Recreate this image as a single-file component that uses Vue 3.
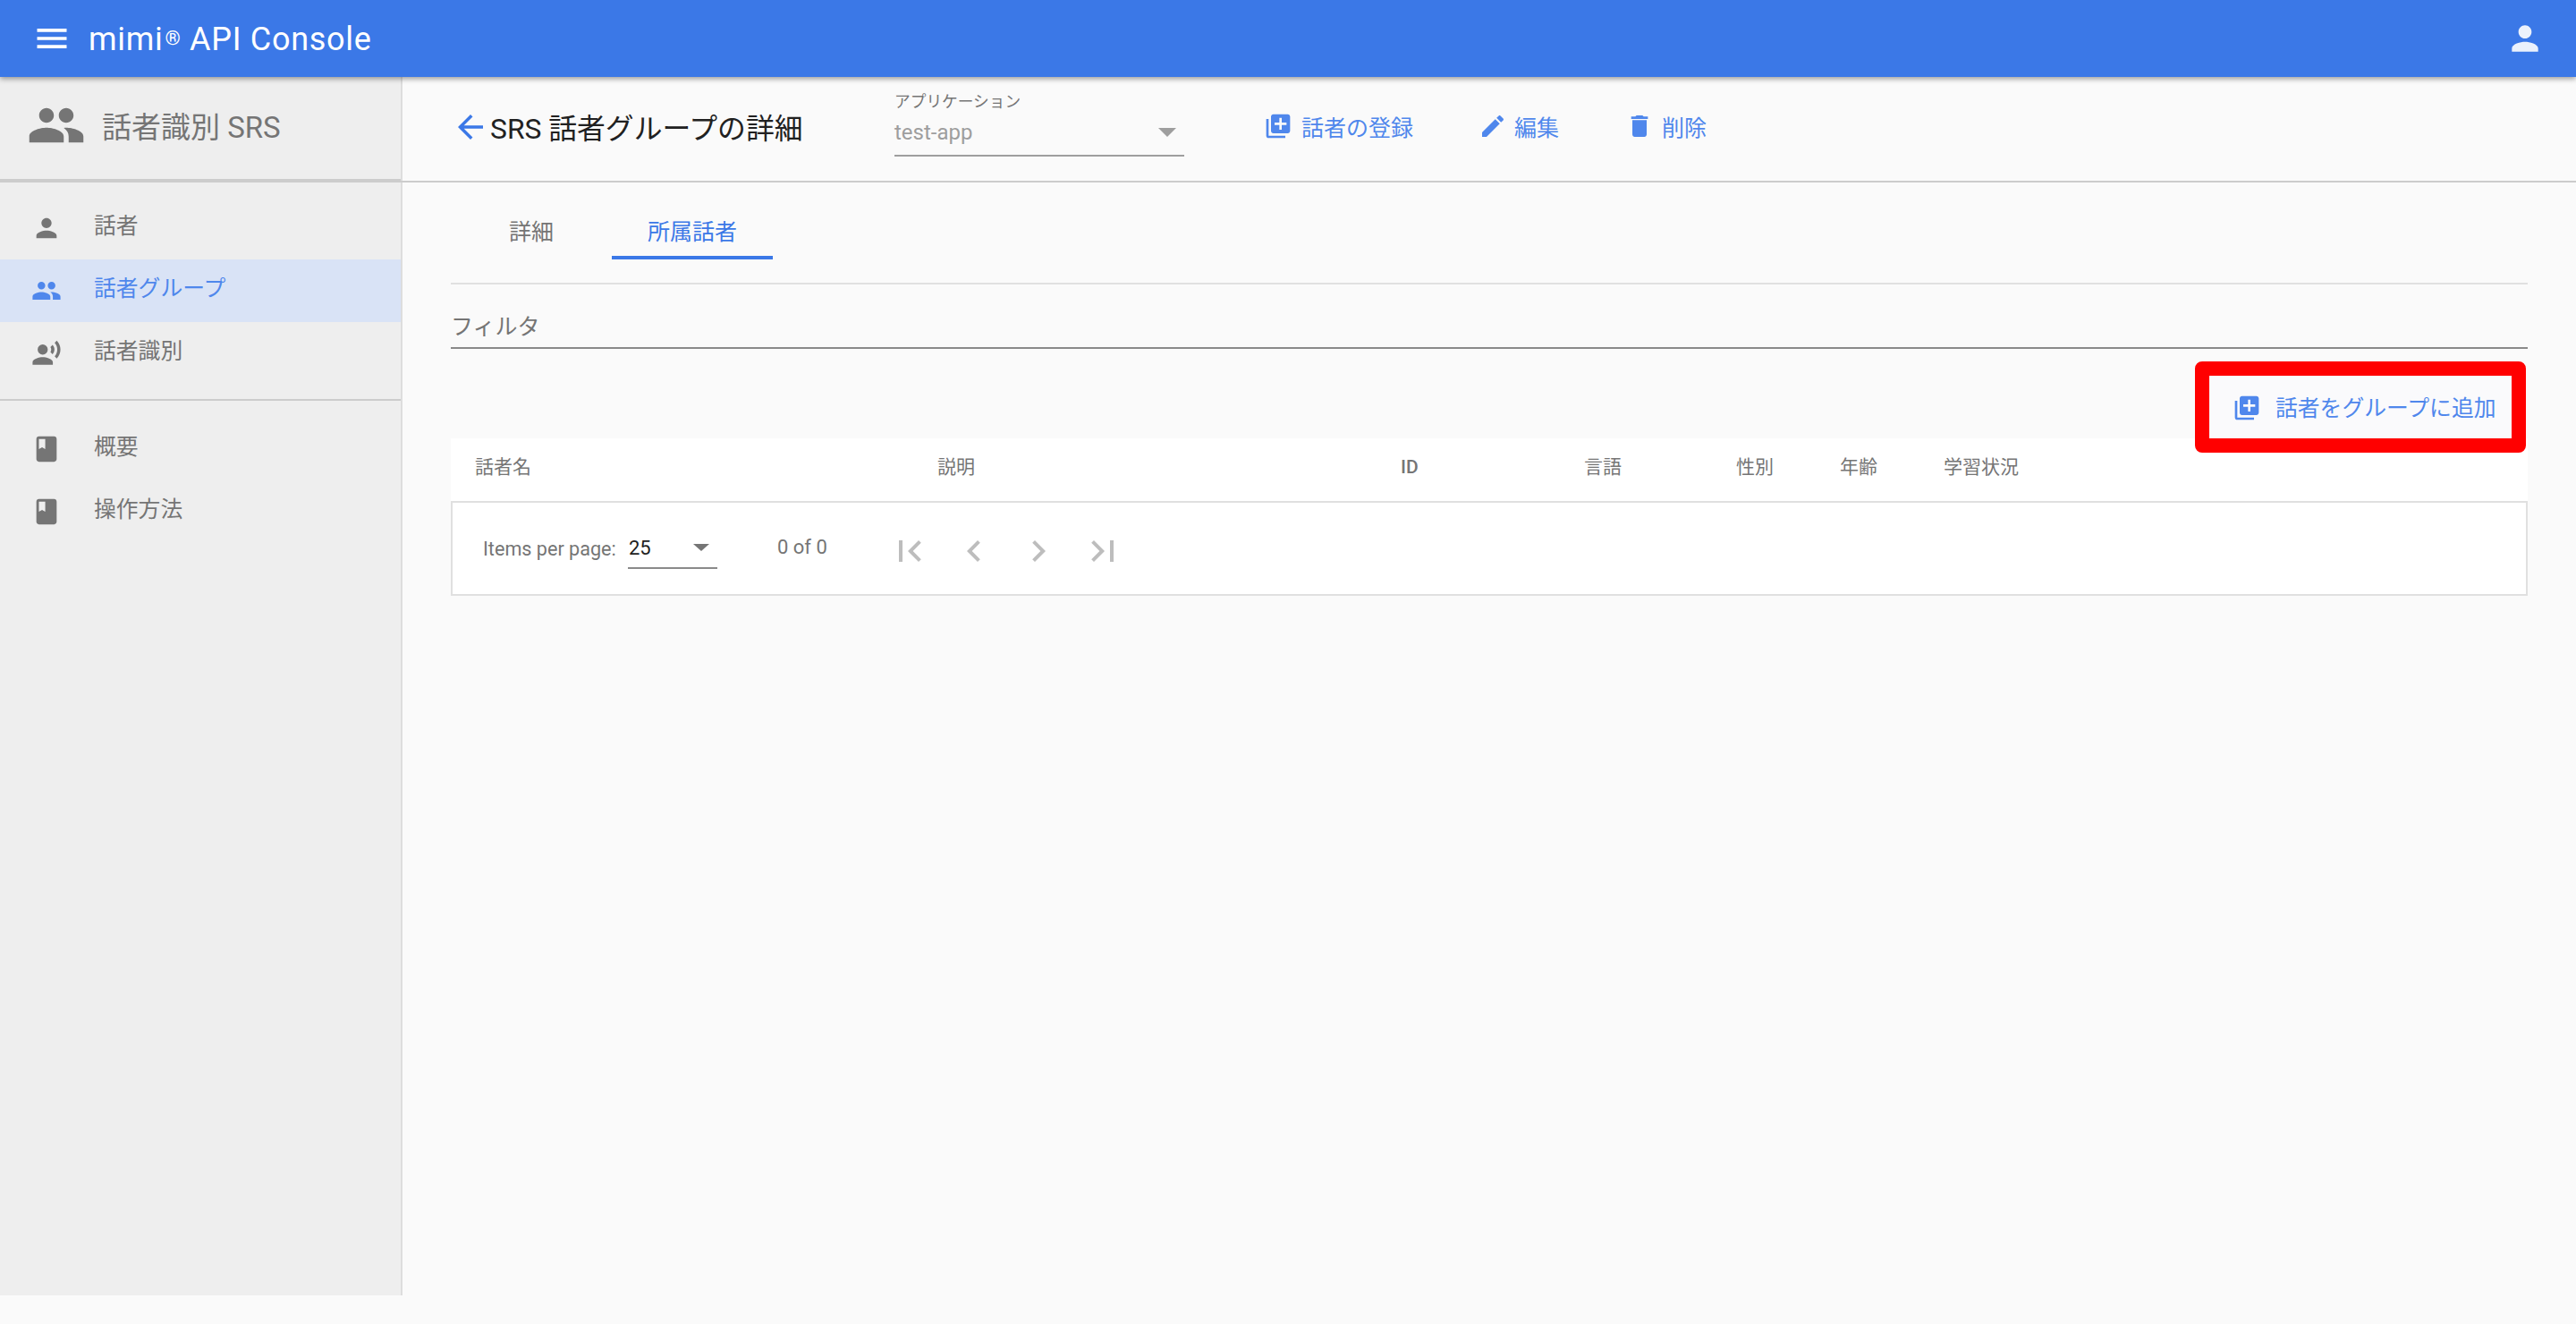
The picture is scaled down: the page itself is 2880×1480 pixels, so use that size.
<script setup>
const icons = {
  menu: 'M3 18h18v-2H3v2zm0-5h18v-2H3v2zm0-7v2h18V6H3z',
  person: 'M12 12c2.21 0 4-1.79 4-4s-1.79-4-4-4-4 1.79-4 4 1.79 4 4 4zm0 2c-2.67 0-8 1.34-8 4v2h16v-2c0-2.66-5.33-4-8-4z',
  group: 'M16 11c1.66 0 2.99-1.34 2.99-3S17.66 5 16 5c-1.66 0-3 1.34-3 3s1.34 3 3 3zm-8 0c1.66 0 2.99-1.34 2.99-3S9.66 5 8 5C6.34 5 5 6.34 5 8s1.34 3 3 3zm0 2c-2.33 0-7 1.17-7 3.5V19h14v-2.5c0-2.33-4.67-3.5-7-3.5zm8 0c-.29 0-.62.02-.97.05 1.16.84 1.97 1.97 1.97 3.45V19h6v-2.5c0-2.33-4.67-3.5-7-3.5z',
  voice: 'M5 9a4 4 0 1 0 8 0 4 4 0 0 0-8 0zM9 15c-2.67 0-8 1.34-8 4v2h16v-2c0-2.66-5.33-4-8-4zm7.76-9.64l-1.68 1.69c.84 1.18.84 2.71 0 3.89l1.68 1.69c2.02-2.02 2.02-5.07 0-7.27zM20.07 2l-1.63 1.63c2.77 3.02 2.77 7.56 0 10.74L20.07 16c3.9-3.89 3.91-9.95 0-14z',
  book: 'M18 2H6c-1.1 0-2 .9-2 2v16c0 1.1.9 2 2 2h12c1.1 0 2-.9 2-2V4c0-1.1-.9-2-2-2zM6 4h5v8l-2.5-1.5L6 12V4z',
  add: 'M4 6H2v14c0 1.1.9 2 2 2h14v-2H4V6zm16-4H8c-1.1 0-2 .9-2 2v12c0 1.1.9 2 2 2h12c1.1 0 2-.9 2-2V4c0-1.1-.9-2-2-2zm-1 9h-4v4h-2v-4H9V9h4V5h2v4h4v2z',
  edit: 'M3 17.25V21h3.75L17.81 9.94l-3.75-3.75L3 17.25zM20.71 7.04c.39-.39.39-1.02 0-1.41l-2.34-2.34c-.39-.39-1.02-.39-1.41 0l-1.83 1.83 3.75 3.75 1.83-1.83z',
  del: 'M6 19c0 1.1.9 2 2 2h8c1.1 0 2-.9 2-2V7H6v12zM19 4h-3.5l-1-1h-5l-1 1H5v2h14V4z',
  back: 'M20 11H7.83l5.59-5.59L12 4l-8 8 8 8 1.41-1.41L7.83 13H20v-2z',
  first: 'M18.41 16.59L13.82 12l4.59-4.59L17 6l-6 6 6 6zM6 6h2v12H6z',
  prev: 'M15.41 7.41L14 6l-6 6 6 6 1.41-1.41L10.83 12z',
  next: 'M10 6L8.59 7.41 13.17 12l-4.58 4.59L10 18l6-6z',
  last: 'M5.59 7.41L10.18 12l-4.59 4.59L7 18l6-6-6-6zM16 6h2v12h-2z',
}
const navTop = [
  { icon: 'person', label: '話者' },
  { icon: 'group', label: '話者グループ', active: true },
  { icon: 'voice', label: '話者識別' },
]
const navBottom = [
  { icon: 'book', label: '概要' },
  { icon: 'book', label: '操作方法' },
]
const actions = [
  { icon: 'add', label: '話者の登録', cls: 'act-add' },
  { icon: 'edit', label: '編集', cls: 'act-edit' },
  { icon: 'del', label: '削除', cls: 'act-del' },
]
const columns = [
  { label: '話者名' },
  { label: '説明' },
  { label: 'ID', cls: 'col-id' },
  { label: '言語' },
  { label: '性別' },
  { label: '年齢' },
  { label: '学習状況' },
]
const pager = ['first', 'prev', 'next', 'last']
</script>

<template>
  <div class="page">
    <header class="toolbar">
      <svg class="ic ic-bar" viewBox="0 0 24 24"><path :d="icons.menu" /></svg>
      <span class="brand">mimi<span class="reg">®</span> API Console</span>
      <svg class="ic ic-bar ic-user" viewBox="0 0 24 24"><path :d="icons.person" /></svg>
    </header>

    <div class="body">
      <aside class="side">
        <div class="side-head">
          <svg class="ic ic-head" viewBox="0 0 24 24"><path :d="icons.group" /></svg>
          <span>話者識別 SRS</span>
        </div>
        <nav class="nav nav-top">
          <div v-for="n in navTop" :key="n.label" class="nav-item" :class="{ active: n.active }">
            <svg class="ic ic-nav" viewBox="0 0 24 24"><path :d="icons[n.icon]" /></svg>
            <span class="nav-label">{{ n.label }}</span>
          </div>
        </nav>
        <nav class="nav nav-bottom">
          <div v-for="n in navBottom" :key="n.label" class="nav-item">
            <svg class="ic ic-nav" viewBox="0 0 24 24"><path :d="icons[n.icon]" /></svg>
            <span class="nav-label">{{ n.label }}</span>
          </div>
        </nav>
      </aside>

      <main class="main">
        <div class="head">
          <svg class="ic ic-back" viewBox="0 0 24 24"><path :d="icons.back" /></svg>
          <h1 class="title">SRS 話者グループの詳細</h1>
          <div class="app-field">
            <div class="app-label">アプリケーション</div>
            <div class="app-value">
              <span>test-app</span>
              <i class="caret"></i>
            </div>
          </div>
          <div v-for="a in actions" :key="a.label" class="action" :class="a.cls">
            <svg class="ic ic-act" viewBox="0 0 24 24"><path :d="icons[a.icon]" /></svg>
            <span>{{ a.label }}</span>
          </div>
        </div>

        <div class="content">
          <div class="tabs">
            <div class="tab">詳細</div>
            <div class="tab tab-on">所属話者</div>
          </div>
          <div class="filter">フィルタ</div>
          <div class="tool-row">
            <div class="add-btn">
              <svg class="ic ic-act" viewBox="0 0 24 24"><path :d="icons.add" /></svg>
              <span class="add-label">話者をグループに追加</span>
            </div>
          </div>
          <div class="thead">
            <span v-for="c in columns" :key="c.label" :class="c.cls">{{ c.label }}</span>
          </div>
          <div class="pagination">
            <span class="per">Items per page:</span>
            <div class="per-select">
              <span>25</span>
              <i class="caret caret-dark"></i>
            </div>
            <span class="range">0 of 0</span>
            <div class="pager">
              <svg v-for="p in pager" :key="p" class="ic ic-page" viewBox="0 0 24 24"><path :d="icons[p]" /></svg>
            </div>
          </div>
        </div>
      </main>
    </div>
  </div>
</template>

<style>
html, body { margin: 0; background: #fafafa; }
</style>

<style scoped>
.page {
  width: 2880px;
  height: 1480px;
  background: #fafafa;
  font-family: Roboto, "Noto Sans CJK JP", sans-serif;
  overflow: hidden;
  position: relative;
}
.ic { fill: currentColor; display: block; flex: none; }

.toolbar {
  height: 86px;
  background: #3b78e7;
  color: #fff;
  display: flex;
  align-items: center;
  padding: 0 36px;
  box-shadow: 0 2px 6px rgba(0, 0, 0, .4);
  position: relative;
  z-index: 2;
}
.ic-bar { width: 44px; height: 44px; }
.brand { margin-left: 19px; font-size: 36px; font-weight: 400; letter-spacing: .7px; white-space: nowrap; padding-top: 2px; }
.reg { font-size: 22px; vertical-align: 6px; margin-left: 2px; }
.ic-user { margin-left: auto; margin-right: -1px; opacity: .9; }

.body { display: flex; height: 1362px; }

.side {
  width: 450px;
  box-sizing: border-box;
  background: #eee;
  border-right: 2px solid #ddd;
  flex: none;
}
.side-head {
  height: 116px;
  box-sizing: border-box;
  border-bottom: 2px solid #ccc;
  display: flex;
  align-items: center;
  padding: 0 0 6px 30px;
  font-size: 33px;
  color: #757575;
}
.ic-head { width: 66px; height: 66px; margin-right: 18px; }
.nav-top { padding-top: 18px; padding-bottom: 16px; border-bottom: 2px solid #ccc; }
.nav-bottom { padding-top: 19px; }
.nav-item {
  height: 70px;
  display: flex;
  align-items: center;
  padding-left: 35px;
  font-size: 24.8px;
  color: #757575;
}
.nav-item.active { background: #d9e3f6; color: #4f87ec; }
.ic-nav { width: 34px; height: 34px; }
.nav-label { margin-left: 36px; padding-bottom: 10px; }

.main { flex: 1; min-width: 0; }
.head {
  height: 118px;
  box-sizing: border-box;
  border-bottom: 2px solid #ccc;
  display: flex;
  align-items: center;
  padding: 0 0 7px 505px;
  margin-left: -450px;
  color: #4f87ec;
  font-size: 25px;
}
.ic-back { width: 42px; height: 42px; color: #3b78e7; margin-top: 3px; }
.title { margin: 0 0 0 1px; font-size: 31.8px; font-weight: 400; color: #212121; white-space: nowrap; width: 452px; }
.app-field { width: 324px; margin-right: 89px; margin-bottom: 4px; }
.app-label { font-size: 17.7px; color: #757575; line-height: 24px; }
.app-value {
  display: flex;
  align-items: center;
  justify-content: space-between;
  color: #9e9e9e;
  font-size: 24px;
  line-height: 36px;
  height: 43px;
  padding-bottom: 4px;
  border-bottom: 2px solid #9e9e9e;
  padding-right: 9px;
}
.caret {
  width: 0;
  height: 0;
  border-left: 10px solid transparent;
  border-right: 10px solid transparent;
  border-top: 10px solid #9e9e9e;
}
.action { display: flex; align-items: center; white-space: nowrap; }
.act-add { width: 240px; }
.act-add .ic-act { margin-right: 10px; }
.act-edit { width: 164px; }
.act-edit .ic-act { margin-right: 8px; }
.act-del .ic-act { margin-right: 9px; }
.ic-act { width: 32px; height: 32px; }

.content { padding: 0 54px; }
.tabs {
  display: flex;
  height: 112px;
  border-bottom: 2px solid #e0e0e0;
}
.tab {
  width: 180px;
  height: 86px;
  box-sizing: border-box;
  padding-top: 38px;
  line-height: 36px;
  text-align: center;
  font-size: 25px;
  color: #757575;
}
.tab-on { color: #3b78e7; border-bottom: 4px solid #3b78e7; }
.filter {
  height: 72px;
  box-sizing: border-box;
  border-bottom: 2px solid #8a8a8a;
  padding-top: 30px;
  line-height: 36px;
  font-size: 25px;
  color: #757575;
}
.tool-row {
  height: 100px;
  display: flex;
  justify-content: flex-end;
  position: relative;
  z-index: 1;
  align-items: flex-start;
}
.add-btn {
  margin-top: 14px;
  margin-right: 2px;
  width: 370px;
  height: 102px;
  box-sizing: border-box;
  border: 16px solid #f00;
  border-radius: 8px;
  display: flex;
  align-items: center;
  padding-left: 26px;
  font-size: 24.8px;
  color: #4f87ec;
  white-space: nowrap;
  background: #fafafc;
}
.add-btn .ic-act { margin-right: 16px; margin-top: 2px; }
.add-label { padding-bottom: 3px; }

.thead {
  height: 72px;
  box-sizing: border-box;
  background: #fff;
  border-bottom: 2px solid #e0e0e0;
  display: grid;
  grid-template-columns: 517px 516px 207px 170px 116px 116px 1fr;
  align-items: center;
  padding: 0 0 10px 27px;
  font-size: 21px;
  color: #757575;
}
.col-id { padding: 3px 0 0 2px; font-weight: 500; }
.pagination {
  height: 104px;
  box-sizing: border-box;
  background: #fff;
  border: 2px solid #e0e0e0;
  border-top: 0;
  display: flex;
  align-items: center;
  padding-left: 34px;
  font-size: 22px;
  color: #757575;
}
.per { width: 162px; font-size: 21.6px; }
.per-select {
  width: 100px;
  height: 46px;
  box-sizing: border-box;
  border-bottom: 2px solid #8a8a8a;
  display: flex;
  align-items: center;
  justify-content: space-between;
  color: #212121;
  padding: 0 9px 0 1px;
}
.caret-dark { border-left-width: 9px; border-right-width: 9px; border-top-width: 8px; border-top-color: #757575; }
.range { margin-left: 67px; width: 104px; margin-top: -4px; white-space: nowrap; }
.pager { display: flex; gap: 24px; margin-left: 20px; margin-top: 6px; color: #bdbdbd; }
.ic-page { width: 48px; height: 48px; }
</style>
